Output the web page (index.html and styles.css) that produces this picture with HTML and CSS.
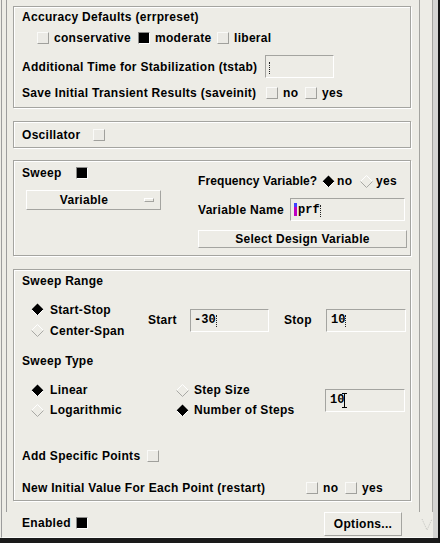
FILE: index.html
```html
<!DOCTYPE html>
<html>
<head>
<meta charset="utf-8">
<link rel="stylesheet" href="styles.css">
</head>
<body>
<div class="window">
  <div class="inner">
    <div class="pane">
      <div class="content">
        <div class="box box1">
          <div class="row r-title">Accuracy Defaults (errpreset)</div>
          <div class="row r-acc">
            <span class="cb"></span><span class="lbl l-cons">conservative</span>
            <span class="cb on"></span><span class="lbl l-mod">moderate</span>
            <span class="cb"></span><span class="lbl">liberal</span>
          </div>
          <div class="row r-tstab">
            <span class="txt w-tstab">Additional Time for Stabilization (tstab)</span>
            <span class="field f-tstab"><span class="dcaret"></span></span>
          </div>
          <div class="row r-save">
            <span class="txt w-save">Save Initial Transient Results (saveinit)</span>
            <span class="cb"></span><span class="lbl l-no">no</span>
            <span class="cb"></span><span class="lbl">yes</span>
          </div>
        </div>

        <div class="box box2">
          <div class="row r-osc">
            <span class="txt w-osc">Oscillator</span><span class="cb"></span>
          </div>
        </div>

        <div class="box box3">
          <div class="col-left">
            <div class="row r-sweep"><span class="txt w-sweep">Sweep</span><span class="cb on"></span></div>
            <div class="optmenu"><span class="om-text">Variable</span><span class="om-ind"></span></div>
          </div>
          <div class="col-right">
            <div class="row r-freq">
              <span class="txt w-freq">Frequency Variable?</span>
              <svg class="dia" width="13" height="13" viewBox="0 0 13 13"><polygon points="6.5,0.5 12.5,6.5 6.5,12.5 0.5,6.5" fill="#000"/><polyline points="0.5,6.5 6.5,12.5 12.5,6.5" fill="none" stroke="#fff"/></svg>
              <span class="lbl l-dno">no</span>
              <svg class="dia" width="13" height="13" viewBox="0 0 13 13"><polyline points="0.5,6.5 6.5,0.5 12.5,6.5" fill="none" stroke="#fff"/><polyline points="0.5,6.5 6.5,12.5 12.5,6.5" fill="none" stroke="#a8a8a4"/></svg>
              <span class="lbl l-dyes">yes</span>
            </div>
            <div class="row r-vname">
              <span class="txt w-vname">Variable Name</span>
              <span class="field f-vname"><span class="mcaret"></span><span class="mono">prf</span><span class="dcaret"></span></span>
            </div>
            <div class="btn b-select">Select Design Variable</div>
          </div>
        </div>

        <div class="box box4">
          <div class="row r-title4">Sweep Range</div>
          <div class="range">
            <div class="radios r-range">
              <div class="rrow">
                <svg class="dia" width="13" height="13" viewBox="0 0 13 13"><polygon points="6.5,0.5 12.5,6.5 6.5,12.5 0.5,6.5" fill="#000"/><polyline points="0.5,6.5 6.5,12.5 12.5,6.5" fill="none" stroke="#fff"/></svg>
                <span class="lbl">Start-Stop</span>
              </div>
              <div class="rrow">
                <svg class="dia" width="13" height="13" viewBox="0 0 13 13"><polyline points="0.5,6.5 6.5,0.5 12.5,6.5" fill="none" stroke="#fff"/><polyline points="0.5,6.5 6.5,12.5 12.5,6.5" fill="none" stroke="#a8a8a4"/></svg>
                <span class="lbl">Center-Span</span>
              </div>
            </div>
            <span class="txt w-start">Start</span>
            <span class="field f-start"><span class="mono">-30</span><span class="dcaret"></span></span>
            <span class="txt w-stop">Stop</span>
            <span class="field f-stop"><span class="mono">10</span><span class="dcaret"></span></span>
          </div>
          <div class="row r-title5">Sweep Type</div>
          <div class="types">
            <div class="radios r-type1">
              <div class="rrow">
                <svg class="dia" width="13" height="13" viewBox="0 0 13 13"><polygon points="6.5,0.5 12.5,6.5 6.5,12.5 0.5,6.5" fill="#000"/><polyline points="0.5,6.5 6.5,12.5 12.5,6.5" fill="none" stroke="#fff"/></svg>
                <span class="lbl">Linear</span>
              </div>
              <div class="rrow">
                <svg class="dia" width="13" height="13" viewBox="0 0 13 13"><polyline points="0.5,6.5 6.5,0.5 12.5,6.5" fill="none" stroke="#fff"/><polyline points="0.5,6.5 6.5,12.5 12.5,6.5" fill="none" stroke="#a8a8a4"/></svg>
                <span class="lbl">Logarithmic</span>
              </div>
            </div>
            <div class="radios r-type2">
              <div class="rrow">
                <svg class="dia" width="13" height="13" viewBox="0 0 13 13"><polyline points="0.5,6.5 6.5,0.5 12.5,6.5" fill="none" stroke="#fff"/><polyline points="0.5,6.5 6.5,12.5 12.5,6.5" fill="none" stroke="#a8a8a4"/></svg>
                <span class="lbl">Step Size</span>
              </div>
              <div class="rrow">
                <svg class="dia" width="13" height="13" viewBox="0 0 13 13"><polygon points="6.5,0.5 12.5,6.5 6.5,12.5 0.5,6.5" fill="#000"/><polyline points="0.5,6.5 6.5,12.5 12.5,6.5" fill="none" stroke="#fff"/></svg>
                <span class="lbl">Number of Steps</span>
              </div>
            </div>
            <span class="field f-steps"><span class="mono">10</span><span class="icaret"></span></span>
          </div>
          <div class="row r-add"><span class="txt w-add">Add Specific Points</span><span class="cb"></span></div>
          <div class="row r-restart">
            <span class="txt w-restart">New Initial Value For Each Point (restart)</span>
            <span class="cb"></span><span class="lbl l-rno">no</span>
            <span class="cb"></span><span class="lbl">yes</span>
          </div>
        </div>
      </div>
      <div class="vbar"></div>
    </div>
    <div class="footer">
      <div class="row r-enabled"><span class="txt w-sweep">Enabled</span><span class="cb on"></span></div>
      <div class="btn b-options">Options...</div>
      <svg class="grip" width="12" height="14" viewBox="0 0 12 14"><polyline points="1,1 6,12 11,1" fill="none" stroke="#c4c4c0" stroke-dasharray="1 1"/></svg>
    </div>
  </div>
  <div class="strip"></div>
</div>
</body>
</html>
```
FILE: styles.css
```css
* { box-sizing: border-box; }
html, body { margin: 0; padding: 0; }
body {
  width: 440px;
  height: 543px;
  overflow: hidden;
  background: #edece6;
  color: #000;
  font: bold 12px "Liberation Sans", Arial, sans-serif;
  letter-spacing: 0.3px;
}

.window {
  width: 440px;
  height: 543px;
  display: flex;
  border-right: 2px solid #141414;
  border-bottom: 5px solid #1a1a1a;
}
.inner {
  margin-left: 1px;
  width: 432px;
  border-left: 1px solid #9c9c9c;
  border-bottom: 1px solid #fafaf8;
  display: flex;
  flex-direction: column;
}
.strip { width: 5px; background: #d4d4d2; }

.pane {
  height: 512px;
  margin-left: 4px;
  border-left: 1px solid #9c9c9c;
  display: flex;
}
.content {
  width: 412px;
  padding: 6px 0 0 6px;
}
.vbar {
  width: 14px;
  border-left: 1px solid #a4a4a0;
  border-right: 1px solid #a4a4a0;
}

/* group boxes */
.box {
  width: 398px;
  border: 1px solid #a4a4a0;
  box-shadow: inset 1px 1px 0 #fff, 1px 1px 0 #fff;
  padding-left: 8px;
}
.box1 { height: 102px; margin-bottom: 13px; }
.box2 { height: 27px; margin-bottom: 12px; }
.box3 { height: 96px; margin-bottom: 13px; display: flex; }
.box4 { height: 232px; }

.row { display: flex; align-items: center; height: 20px; white-space: nowrap; }
.txt, .lbl { white-space: nowrap; flex: none; }

/* box1 */
.r-acc { margin-top: 1px; padding-left: 15px; }
.r-tstab { margin-top: 7px; height: 23px; }
.r-save { margin-top: 5px; }
.lbl { margin-left: 5px; }
.l-cons { width: 84px; }
.l-mod { width: 62px; }
.w-tstab { width: 243px; }
.f-tstab { width: 69px; height: 23px; }
.w-save { width: 244px; }
.l-no { width: 22px; }

/* box2 */
.r-osc { height: 25px; }
.w-osc { width: 71px; }

/* box3 */
.col-left { width: 176px; }
.r-sweep { margin-top: 2px; }
.w-sweep { width: 54px; }
.optmenu {
  margin-top: 7px;
  margin-left: 4px;
  width: 135px;
  height: 20px;
  border: 1px solid;
  border-color: #fff #a4a4a0 #a4a4a0 #fff;
  display: flex;
  align-items: center;
}
.om-text { width: 114px; text-align: center; }
.om-ind {
  margin-left: 3px;
  width: 10px;
  height: 4px;
  border: 1px solid;
  border-color: #fff #a4a4a0 #a4a4a0 #fff;
}
.col-right { width: 212px; }
.r-freq { margin-top: 10px; }
.w-freq { width: 124px; letter-spacing: 0.1px; }
.l-dno { margin-left: 2px; width: 23px; }
.l-dyes { margin-left: 3px; }
.dia { flex: none; display: block; }
.r-vname { margin-top: 7px; height: 23px; }
.w-vname { width: 92px; }
.f-vname { width: 115px; height: 23px; }
.btn {
  border: 1px solid;
  border-color: #fff #a4a4a0 #a4a4a0 #fff;
  display: flex;
  align-items: center;
  justify-content: center;
}
.b-select { margin-top: 9px; width: 209px; height: 18px; }

/* fields */
.field {
  display: flex;
  align-items: center;
  border: 1px solid;
  border-color: #a4a4a0 #fff #fff #a4a4a0;
  padding-left: 3px;
  flex: none;
}
.mono {
  font: bold 12px "Liberation Mono", "Courier New", monospace;
  letter-spacing: 0;
}
.dcaret {
  display: inline-block;
  width: 1px;
  height: 12px;
  margin-top: 2px;
  border-left: 1px dotted #222;
}
.mcaret {
  display: inline-block;
  width: 3px;
  height: 13px;
  background: linear-gradient(#4040ff 0 30%, #c000c0 30% 100%);
  margin-right: 1px;
}
.icaret {
  display: inline-block;
  width: 1px;
  height: 15px;
  background: #000;
  position: relative;
}
.icaret::before, .icaret::after {
  content: "";
  position: absolute;
  left: -2px;
  width: 5px;
  height: 1px;
  background: #000;
}
.icaret::before { top: 0; }
.icaret::after { bottom: 0; }

/* box4 */
.r-title4 { margin-top: 1px; }
.range { margin-top: 8px; display: flex; align-items: center; height: 42px; }
.radios { display: flex; flex-direction: column; }
.r-range { width: 126px; padding-left: 9px; }
.rrow { display: flex; align-items: center; height: 21px; }
.rrow .lbl { margin-left: 6px; }
.w-start { width: 42px; }
.f-start { width: 79px; height: 23px; }
.w-stop { width: 42px; margin-left: 15px; }
.f-stop { width: 80px; height: 23px; padding-left: 4px; }
.r-title5 { margin-top: 10px; }
.types { margin-top: 9px; display: flex; align-items: center; height: 40px; }
.types .rrow { height: 20px; }
.r-type1 { width: 154px; padding-left: 9px; }
.r-type2 { width: 149px; }
.r-type2 .rrow .lbl { margin-left: 5px; }
.f-steps { width: 80px; height: 23px; padding-left: 4px; }
.r-add { margin-top: 26px; }
.w-add { width: 125px; }
.r-restart { margin-top: 12px; }
.w-restart { width: 284px; }
.l-rno { width: 22px; }

/* checkbox */
.cb {
  flex: none;
  display: inline-block;
  width: 12px;
  height: 12px;
  border: 1px solid;
  border-color: #fafaf8 #a0a09c #a0a09c #fafaf8;
  background: #ebeae5;
}
.cb.on {
  background: #000;
  border-color: #8a8a88 #fff #fff #8a8a88;
}

/* footer */
.footer {
  flex: 1;
  display: flex;
  align-items: flex-start;
  padding-left: 20px;
}
.r-enabled { height: 22px; }
.b-options {
  margin-left: auto;
  width: 78px;
  height: 24px;
}
.grip { margin-left: 19px; margin-top: 6px; display: block; }
```
